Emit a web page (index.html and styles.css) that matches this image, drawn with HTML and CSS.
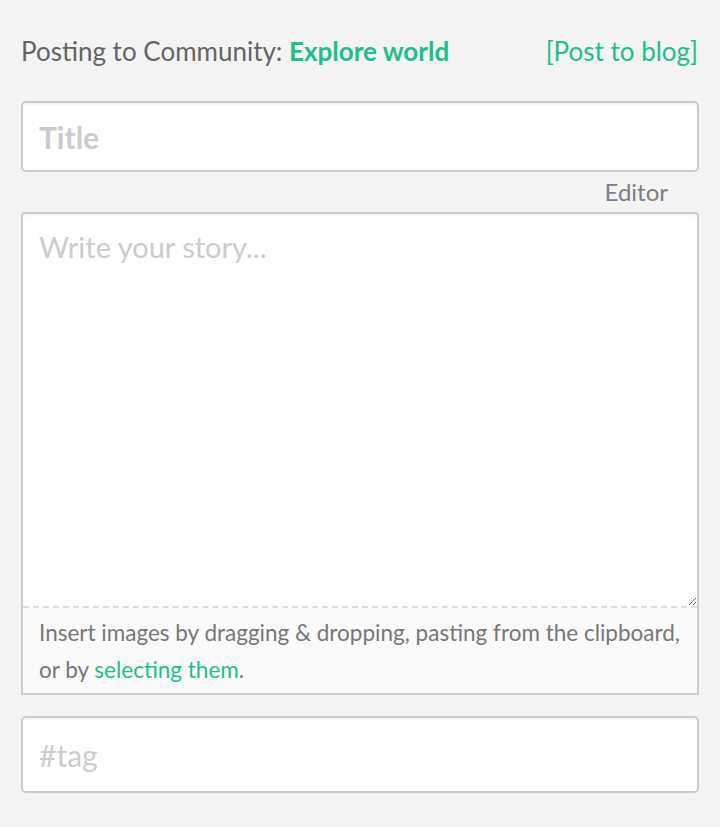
FILE: index.html
```html
<!DOCTYPE html>
<html><head><meta charset="utf-8"><link rel="stylesheet" href="styles.css"></head>
<body>
<div class="page">
  <div class="header">
    <div class="posting">Posting to Community: <span class="community">Explore world</span></div>
    <a class="blog-link" href="#">[Post to blog]</a>
  </div>
  <input class="field title-field" type="text" placeholder="Title">
  <div class="editor-label">Editor</div>
  <div class="editor">
    <textarea class="story" placeholder="Write your story..."></textarea>
    <div class="editor-footer">Insert images by dragging &amp; dropping, pasting from the clipboard, or by <a href="#" class="select-link">selecting them</a>.</div>
  </div>
  <input class="field tag-field" type="text" placeholder="#tag">
</div>
</body></html>
```
FILE: styles.css
```css
html, body { margin: 0; padding: 0; background: #f4f4f4; }
body { font-family: Lato, "Noto Sans", sans-serif; }
.page { padding: 34px 21px 0 21px; display: flex; flex-direction: column; }
.header { display: flex; justify-content: space-between; align-items: baseline; height: 34px; line-height: 34px; font-size: 26px; color: #646464; }
.community { color: #1dbf8e; font-weight: bold; }
.blog-link { color: #1dbf8e; text-decoration: none; margin-right: 1px; }
.field {
  box-sizing: border-box; width: 100%; margin: 0; display: block;
  border: 2px solid #cccccc; border-radius: 5px; background: #fff;
  box-shadow: inset 0 2px 2px rgba(0,0,0,0.05);
  padding: 0 16px; font-family: Lato, "Noto Sans", sans-serif; outline: none;
}
.field::placeholder { color: #cccccc; opacity: 1; }
.title-field { margin-top: 33px; height: 71px; font-size: 30px; font-weight: bold; }
.editor-label { height: 40px; line-height: 40px; font-size: 24px; color: #7b8085; text-align: right; padding-right: 31px; }
.editor { border: 2px solid #cccccc; border-radius: 4px 4px 0 0; background: #fafafa; display: flex; flex-direction: column; }
.story {
  box-sizing: border-box; display: block; width: 100%; height: 394px; margin: 0;
  border: none; border-bottom: 2px dashed #dddddd; border-radius: 4px 4px 0 0;
  background: #fff; padding: 15px 16px; resize: vertical; outline: none;
  box-shadow: inset 0 2px 2px rgba(0,0,0,0.05);
  font-family: Lato, "Noto Sans", sans-serif; font-size: 29px; line-height: 36px; color: #444;
}
.story::placeholder { color: #cccccc; opacity: 1; }
.editor-footer { padding: 6px 16px 5px 16px; font-size: 22.5px; line-height: 37px; color: #777777; }
.select-link { color: #1dbf8e; text-decoration: none; }
.tag-field { margin-top: 21px; height: 77px; font-size: 30px; }
```
